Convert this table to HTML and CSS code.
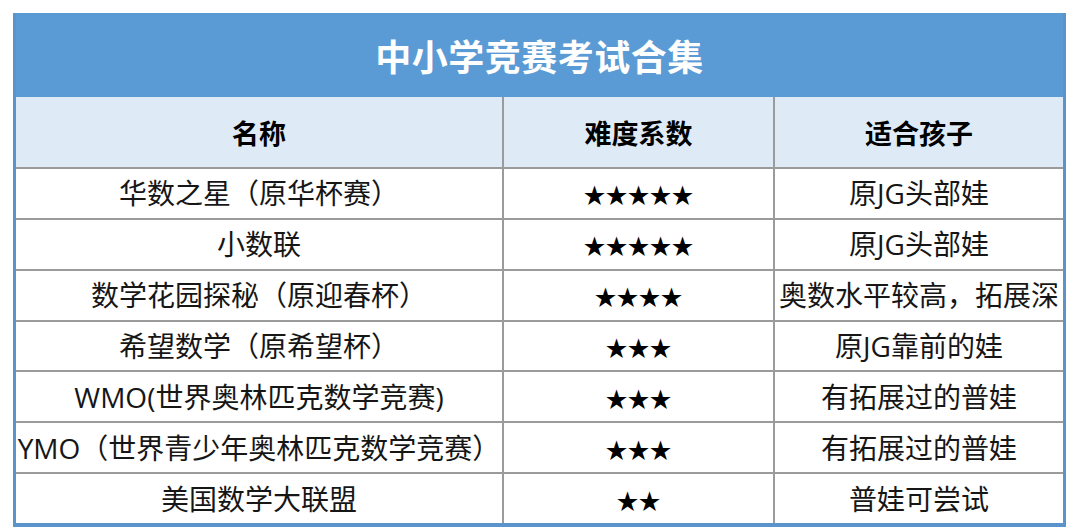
FILE: index.html
```html
<!DOCTYPE html>
<html lang="zh">
<head>
<meta charset="utf-8">
<title>中小学竞赛考试合集</title>
<link rel="stylesheet" href="styles.css">
</head>
<body>
<div class="table">
  <div class="title">中小学竞赛考试合集</div>
  <div class="grid">
    <div class="cell head">名称</div>
    <div class="cell head">难度系数</div>
    <div class="cell head">适合孩子</div>

    <div class="cell">华数之星（原华杯赛）</div>
    <div class="cell stars">★★★★★</div>
    <div class="cell">原JG头部娃</div>

    <div class="cell">小数联</div>
    <div class="cell stars">★★★★★</div>
    <div class="cell">原JG头部娃</div>

    <div class="cell">数学花园探秘（原迎春杯）</div>
    <div class="cell stars">★★★★</div>
    <div class="cell">奥数水平较高，拓展深</div>

    <div class="cell">希望数学（原希望杯）</div>
    <div class="cell stars">★★★</div>
    <div class="cell">原JG靠前的娃</div>

    <div class="cell">WMO(世界奥林匹克数学竞赛)</div>
    <div class="cell stars">★★★</div>
    <div class="cell">有拓展过的普娃</div>

    <div class="cell">YMO（世界青少年奥林匹克数学竞赛）</div>
    <div class="cell stars">★★★</div>
    <div class="cell">有拓展过的普娃</div>

    <div class="cell">美国数学大联盟</div>
    <div class="cell stars">★★</div>
    <div class="cell">普娃可尝试</div>
  </div>
</div>
</body>
</html>
```

FILE: styles.css
```css
html, body {
  margin: 0;
  padding: 0;
  background: #ffffff;
}

body {
  font-family: "Open Sans", "Noto Sans CJK SC", sans-serif;
  height: 528px;
  overflow: hidden;
}

.table {
  margin: 13px 0 0 13px;
  width: 1047px;
  border-left: 3px solid #5b93cb;
  border-right: 3px solid #5b93cb;
  border-bottom: 4px solid #5b93cb;
  border-top: 0;
  background: #5b9bd5;
}

.title {
  height: 84px;
  background: #5b9bd5;
  color: #ffffff;
  font-family: "Noto Sans CJK SC", sans-serif;
  font-weight: 700;
  font-size: 36px;
  display: flex;
  align-items: center;
  justify-content: center;
  letter-spacing: 0.5px;
}

.grid {
  display: grid;
  grid-template-columns: 486px 269px 288px;
  grid-template-rows: 70px repeat(7, 1fr);
  gap: 2px;
  height: 426px;
  background: #9b9b9b;
}

.cell {
  background: #ffffff;
  display: flex;
  align-items: center;
  justify-content: center;
  white-space: nowrap;
  overflow: hidden;
  font-size: 28px;
  color: #161616;
  line-height: 1;
}

.head {
  background: #deebf6;
  font-family: "Noto Sans CJK SC", sans-serif;
  font-weight: 700;
  color: #000000;
  font-size: 27px;
}

.stars {
  font-family: "Noto Sans CJK SC", sans-serif;
  font-size: 22px;
  color: #000000;
}
```
